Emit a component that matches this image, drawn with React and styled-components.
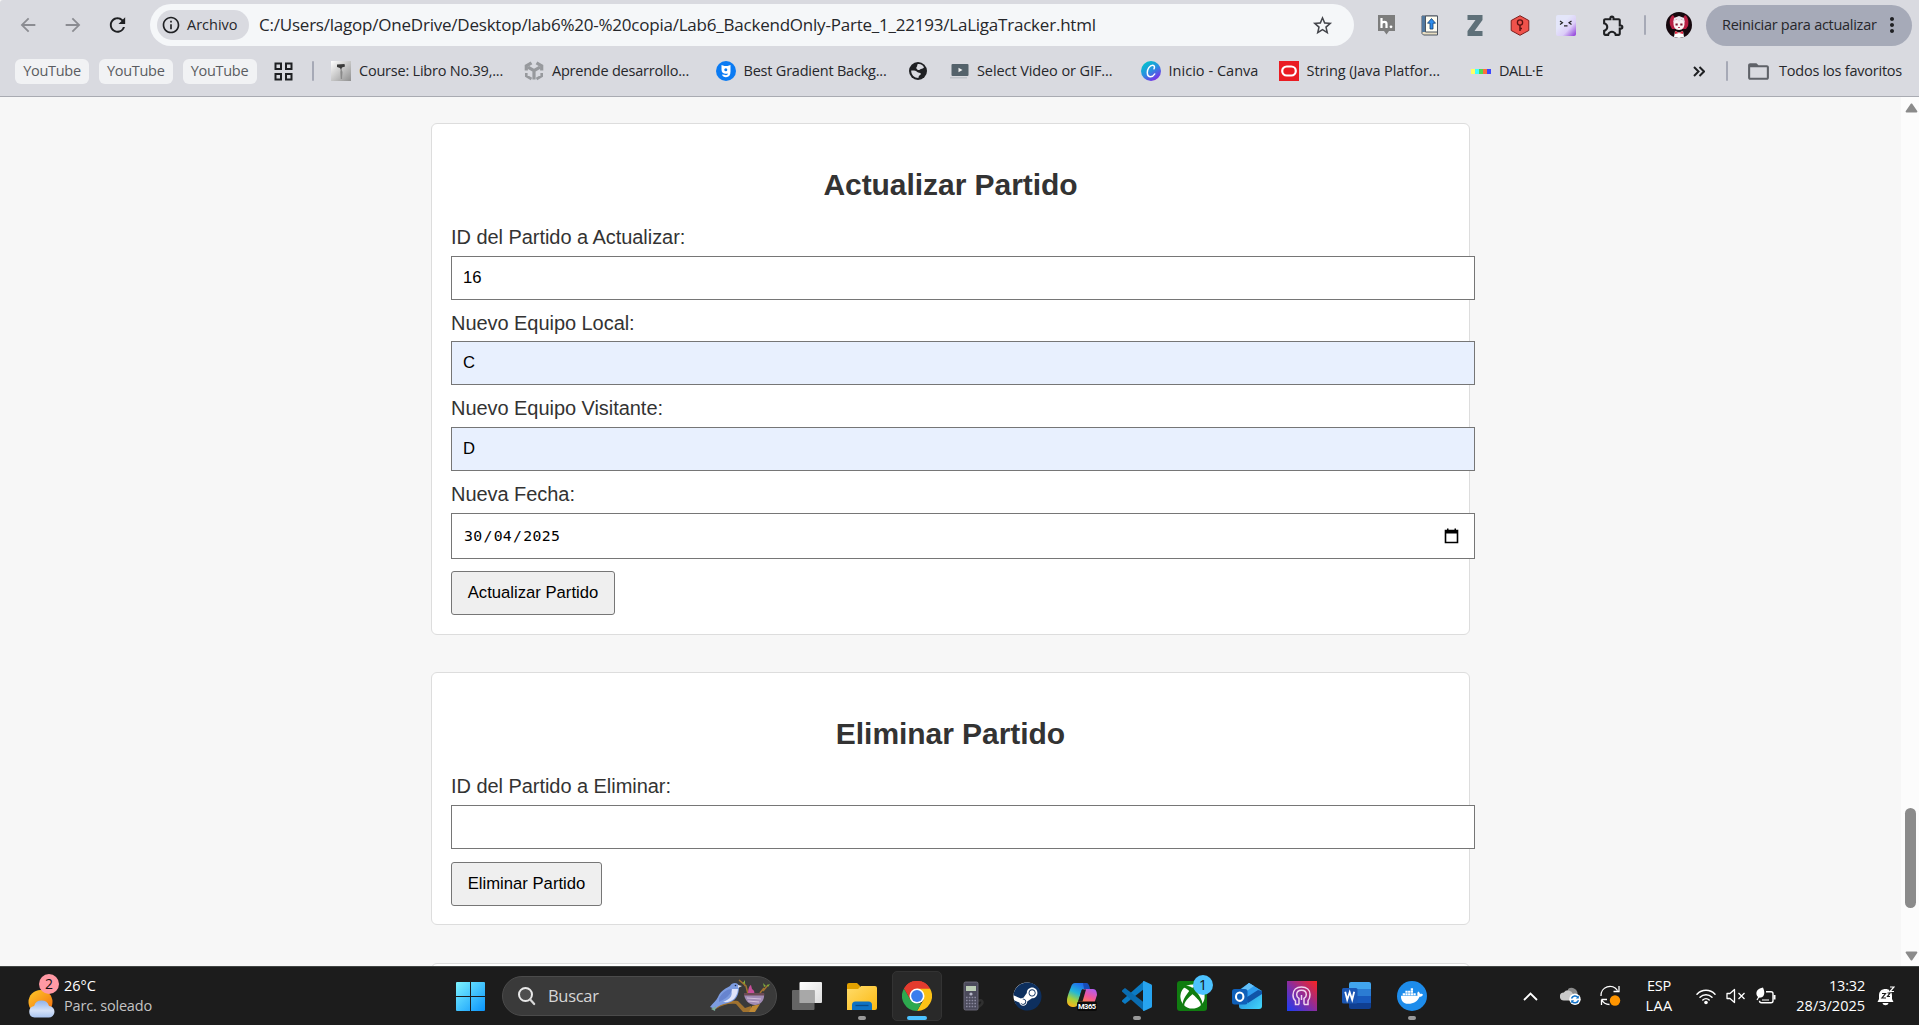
import React from "react";
import styled, { createGlobalStyle, css } from "styled-components";
import {
  MdArrowBack,
  MdArrowForward,
  MdRefresh,
  MdInfoOutline,
  MdStarOutline,
  MdOutlineExtension,
  MdMoreVert,
  MdFolderOpen,
} from "react-icons/md";
import { FaXbox, FaDocker, FaSteam } from "react-icons/fa";

const GlobalStyle = createGlobalStyle`
  * { box-sizing: border-box; }
  html, body { margin: 0; padding: 0; }
  body { overflow: hidden; background: #f7f7f7; }
`;

const uiFont = css`
  font-family: "Open Sans", "Noto Sans", sans-serif;
`;
const pageFont = css`
  font-family: "Liberation Sans", Arial, sans-serif;
`;

const Screen = styled.div`
  display: flex;
  flex-direction: column;
  width: 1919px;
  height: 1025px;
  overflow: hidden;
`;

const UiText = styled.span`
  ${uiFont}
  font-size: ${(p) => p.$size || 14.5}px;
  font-weight: ${(p) => p.$weight || 400};
  letter-spacing: ${(p) => p.$track || 0}px;
  line-height: 20px;
  color: ${(p) => p.$color || "#26272b"};
  white-space: nowrap;
`;

/* ---------- browser chrome ---------- */

const BrowserChrome = styled.header`
  flex: none;
  height: 97px;
  background: #d9dae0;
  border-bottom: 1px solid #a9abb2;
  border-top-left-radius: 3px;
`;

const Toolbar = styled.div`
  display: flex;
  align-items: center;
  height: 50px;
  padding-left: 17px;
`;

const NavButton = styled.span`
  display: flex;
  justify-content: center;
  width: ${(p) => p.$w}px;
  color: ${(p) => (p.$active ? "#1f2023" : "#8b8c92")};
`;

const AddressBar = styled.div`
  display: flex;
  align-items: center;
  width: 1204px;
  height: 42px;
  margin-left: 21px;
  padding: 0 20px 0 7px;
  border-radius: 21px;
  background: #f5f7f9;
`;

const FileChip = styled.div`
  display: flex;
  align-items: center;
  gap: 6px;
  width: 92px;
  height: 30px;
  margin-right: 10px;
  padding-left: 4px;
  border-radius: 15px;
  background: #d9dae0;
  color: #1f2023;
`;

const Url = styled(UiText)`
  flex: 1;
`;

const Extensions = styled.div`
  display: flex;
  align-items: center;
  justify-content: space-between;
  width: 249px;
  margin-left: 23px;
`;

const Divider = styled.span`
  flex: none;
  width: 2px;
  height: 20px;
  margin-left: ${(p) => p.$ml || 0}px;
  border-radius: 1px;
  background: #a6a9b6;
`;

const Avatar = styled.span`
  display: flex;
  margin-left: 20px;
`;

const RestartButton = styled.div`
  display: flex;
  align-items: center;
  justify-content: space-between;
  width: 206px;
  height: 41px;
  margin-left: 14px;
  padding: 0 8px 0 16px;
  border-radius: 21px;
  background: #a6aab8;
`;

const BookmarkBar = styled.nav`
  display: flex;
  align-items: center;
  height: 42px;
  padding-left: 15px;
`;

const BookmarkChip = styled.span`
  display: flex;
  align-items: center;
  justify-content: center;
  width: 74px;
  height: 25px;
  margin-right: 9.75px;
  border-radius: 6px;
  background: #f1f2f4;
`;

const GridIcon = styled.svg`
  margin-left: 7.75px;
`;

const Bookmark = styled.span`
  display: flex;
  flex: none;
  align-items: center;
  gap: 8px;
  width: ${(p) => p.$w}px;
  svg { flex: none; }
`;

const Bookmarks = styled.div`
  display: flex;
  align-items: center;
  flex: 1;
  margin-left: 17px;
`;

const AllBookmarks = styled.div`
  display: flex;
  align-items: center;
  padding-right: 17px;
  svg { flex: none; }
`;

/* ---------- page ---------- */

const Viewport = styled.main`
  display: flex;
  height: 869px;
  flex: none;
  overflow: hidden;
  background: #f7f7f7;
`;

const Page = styled.div`
  ${pageFont}
  display: flex;
  flex: 1;
  flex-direction: column;
  align-items: center;
  gap: 37.5px;
  padding-top: 25.6px;
  color: #333;
`;

const Card = styled.section`
  flex: none;
  width: 1039px;
  height: ${(p) => p.$h}px;
  padding: 44.4px 19px 0;
  border: 1px solid #ddd;
  border-radius: 6px;
  background: #fff;
`;

const Title = styled.h2`
  margin: 0 0 23.9px;
  font-size: 30px;
  line-height: 34px;
  letter-spacing: -0.05px;
  text-align: center;
`;

const Field = styled.label`
  display: block;
  width: 1024px;
  margin-bottom: 12px;
`;

const FieldLabel = styled.span`
  display: block;
  height: 29.7px;
  font-size: 20px;
  line-height: 23px;
  letter-spacing: -0.05px;
`;

const fieldBox = css`
  width: 100%;
  padding: 0 11px;
  border: 1px solid #767676;
  color: #000;
`;

const TextInput = styled.input`
  ${fieldBox}
  ${pageFont}
  display: block;
  height: 44px;
  margin: 0;
  border-radius: 0;
  outline: none;
  background: ${(p) => (p.$autofilled ? "#e8f0fe" : "#fff")};
  font-size: 16.67px;
`;

const DateInput = styled.div`
  ${fieldBox}
  display: flex;
  align-items: center;
  justify-content: space-between;
  height: 46px;
  padding: 0 15px 0 12px;
  background: #fff;
`;

const DateText = styled.span`
  font-family: "DejaVu Sans Mono", monospace;
  font-size: 14.8px;
  letter-spacing: 0.3px;
  span { padding: 0 1px; }
`;

const Button = styled.button`
  ${pageFont}
  display: block;
  width: ${(p) => p.$w}px;
  height: 44px;
  margin-top: ${(p) => p.$mt}px;
  padding: 0;
  border: 1px solid #767676;
  border-radius: 3px;
  background: #efefef;
  color: #000;
  font-size: 16.67px;
  white-space: nowrap;
`;

const Scrollbar = styled.aside`
  display: flex;
  flex-direction: column;
  align-items: center;
  width: 18px;
  padding: 6px 0 5px 2px;
  background: #fcfcfc;
`;

const Thumb = styled.span`
  width: 11px;
  height: 100px;
  margin: 695px 1px auto 0;
  border-radius: 6px;
  background: #8b8b8b;
`;

/* ---------- taskbar ---------- */

const Taskbar = styled.footer`
  display: flex;
  align-items: center;
  flex: none;
  height: 59px;
  border-top: 1px solid #414543;
  background: #1c1c1c;
`;

const Weather = styled.div`
  display: flex;
  align-items: center;
  gap: 6px;
  width: 456px;
  padding-left: 28px;
`;

const Stack = styled.div`
  display: flex;
  flex-direction: column;
  align-items: ${(p) => p.$align || "flex-start"};
  width: ${(p) => (p.$w ? `${p.$w}px` : "auto")};
`;

const SearchBox = styled.div`
  display: flex;
  align-items: center;
  width: 275px;
  height: 40px;
  margin-left: 17px;
  padding: 0 6px 0 14px;
  border: 1px solid #4b4b4b;
  border-radius: 20px;
  background: #3a3a3a;
`;

const SearchLabel = styled(UiText)`
  flex: 1;
  margin-left: 12px;
`;

const Apps = styled.div`
  display: flex;
  gap: 5px;
  margin-left: 5px;
`;

const AppTile = styled.div`
  display: flex;
  flex-direction: column;
  align-items: center;
  width: 50px;
  height: 50px;
  padding-top: 9px;
  border: 1px solid ${(p) => (p.$active ? "#333" : "transparent")};
  border-radius: 5px;
  background: ${(p) => (p.$active ? "#292929" : "transparent")};
  svg { flex: none; }
`;

const Indicator = styled.span`
  flex: none;
  width: ${(p) => (p.$active ? 20 : 8)}px;
  height: 4px;
  margin-top: 5px;
  border-radius: 2px;
  background: ${(p) => (p.$active ? "#4cc2ff" : "#999")};
`;

const IconHolder = styled.div`
  position: relative;
  display: flex;
  width: 30px;
  height: 30px;
  svg { flex: none; }
`;

const Badge = styled.span`
  ${uiFont}
  position: absolute;
  top: ${(p) => p.$top}px;
  right: ${(p) => p.$right}px;
  width: 20px;
  height: 20px;
  border-radius: 50%;
  background: ${(p) => p.$bg};
  color: #111;
  font-size: 14px;
  line-height: 19px;
  text-align: center;
`;

const BoxIcon = styled.span`
  display: flex;
  align-items: center;
  justify-content: center;
  width: 30px;
  height: 30px;
  border-radius: ${(p) => p.$radius || 0};
  background: ${(p) => p.$bg};
  color: #fff;
`;

const Tray = styled.div`
  display: flex;
  align-items: center;
  margin-left: auto;
  padding-right: 24px;
  svg { flex: none; }
`;

const Gap = styled.span`
  width: ${(p) => p.$w}px;
`;

/* ---------- drawings ---------- */

const HypothesisIcon = () => (
  <svg width="19" height="20" viewBox="0 0 19 20">
    <path d="M1 0h17v16h-6l-2.500 3.500L7 16H1z" fill="#7d7d7d" />
    <path d="M4.500 3v10M4.500 8.500c1-2 5-2.300 5 .6V13" fill="none" stroke="#fff" strokeWidth="2.200" />
    <circle cx="14" cy="11.800" r="1.400" fill="#fff" />
  </svg>
);

const BookIcon = () => (
  <svg width="18" height="21" viewBox="0 0 18 21">
    <path d="M1 1h15.500v19H2.500L1 18.500z" fill="#e9dfc4" stroke="#4d5560" />
    <path d="M1 1h3.500v16H1z" fill="#52789e" />
    <path d="M4.500 1H16.500v16H4.500z" fill="#fffdf2" stroke="#4d5560" />
    <path d="M10.500 3.500l4 4.700H12V14H9V8.200H6.500z" fill="#2f8cec" stroke="#123d70" strokeWidth=".8" />
  </svg>
);

const ZIcon = () => (
  <svg width="20" height="21" viewBox="-2 0 20 21">
    <path d="M.5 0h15v5L7.500 16H15.500v5H.5v-5L8.500 5H.5z" fill="#5f7079" />
  </svg>
);

const KeyHexIcon = () => (
  <svg width="20" height="21" viewBox="0 0 20 21">
    <path d="M10 .7l8.800 4.800v10L10 20.300 1.200 15.500v-10z" fill="#f0524b" stroke="#7c1d1d" />
    <circle cx="10" cy="7.500" r="2.600" fill="none" stroke="#5d1212" strokeWidth="1.300" />
    <path d="M10 10v6M10 13.500h2" stroke="#5d1212" strokeWidth="1.500" />
  </svg>
);

const FaceIcon = () => (
  <svg width="20" height="21" viewBox="0 0 20 21">
    <defs>
      <linearGradient id="face" x1="0" y1="0" x2="1" y2="1">
        <stop offset=".35" stopColor="#e4e6fa" />
        <stop offset=".65" stopColor="#dccdf8" />
        <stop offset="1" stopColor="#8b35d8" />
      </linearGradient>
    </defs>
    <rect width="20" height="21" rx="2" fill="url(#face)" />
    <path d="M4 6l2.500 1.800L4 9.600M15.500 6L13 7.800l2.500 1.800M8 10.800h3.500" fill="none" stroke="#222" strokeWidth="1.200" />
  </svg>
);

const AvatarIcon = () => (
  <svg width="26" height="26" viewBox="0 0 26 26">
    <circle cx="13" cy="13" r="13" fill="#16080e" />
    <path d="M4 13C3 7 5 4 7 3l2 3c2-1.500 6-1.500 8 0l2-3c3 2 4 6 3 11l-2 3H6z" fill="#b81f42" />
    <path d="M7.500 11.500c0-3 2-4.500 5.500-4.500s5.500 1.500 5.500 4.500-1.500 6.500-5.500 6.500-5.500-3.500-5.500-6.500z" fill="#fbf3f3" />
    <path d="M7 11l3.500-4 2.500 3 2.500-3 3.500 4-1-5-5-2-5 2z" fill="#e9e4ec" />
    <path d="M9.500 12.500h2.200M14.300 12.500h2.200" stroke="#7e1730" strokeWidth="2" />
    <path d="M12 15.500h2" stroke="#c0405a" />
    <path d="M9 19l4 1.500 4-1.500 1 6-5 1-5-1z" fill="#fff" />
    <path d="M9 19l4 2 4-2v3l-4-1-4 1z" fill="#e0243f" />
  </svg>
);

const CourseIcon = () => (
  <svg width="20" height="20" viewBox="0 0 20 20">
    <defs>
      <linearGradient id="course" x2="1" y2="1">
        <stop stopColor="#fff" />
        <stop offset="1" stopColor="#8f8f8f" />
      </linearGradient>
    </defs>
    <rect width="20" height="20" fill="url(#course)" />
    <path d="M6 3.500l7.500-.5.5 2.500-3 1-1 2.500-1-2-3-1z" fill="#3a3a3a" />
    <path d="M10 7l1.500 4-.5 7H9.800L9.300 11z" fill="#8a8a8a" />
  </svg>
);

const UnityIcon = () => (
  <svg width="20" height="20" viewBox="0 0 20 20" fill="none" stroke="#97999d" strokeWidth="3.200">
    <path d="M7.500 1.800L2.300 5v4.500M12.500 1.800L17.700 5v4.500" />
    <path d="M2.300 12v3L7.500 18M17.700 12v3L12.500 18" strokeWidth="2.600" />
    <path d="M4 6.200L10 9.700 16 6.200M10 9.700V18.500" />
  </svg>
);

const GradientSiteIcon = () => (
  <svg width="20" height="20" viewBox="0 0 20 20">
    <circle cx="10" cy="10" r="10" fill="#0b7bf3" />
    <path d="M5.500 4l3 1h3l3-1v6.500c0 3.800-1.500 5.700-4.500 5.700-2 0-3.500-.8-4-2.700l2.500.2c1 .8 3.500.6 3.300-1.200-3.500 1-6.300-.6-6.300-3.800z" fill="#fff" />
    <circle cx="9.800" cy="8.700" r="1.500" fill="#0b7bf3" />
  </svg>
);

const GlobeIcon = () => (
  <svg width="18" height="18" viewBox="0 0 18 18">
    <circle cx="9" cy="9" r="9" fill="#1f2023" />
    <path d="M8.500 2.200c3-.6 5.500.8 6.500 3.300-1 1.600-3 1-4 2-.8.900-2 .7-2.700 0C7 6.500 7 5.500 8 4.500zM2.200 8.500c2-.3 5 0 6 1.500 1 1.200 3 .6 3.600 1.600.6 1.200-1.600 1.600-2 2.600l-.4 1.800C5.500 16 2 13 2.200 8.500z" fill="#d9dae0" />
  </svg>
);

const VideoIcon = () => (
  <svg width="20" height="16" viewBox="0 0 20 16">
    <rect x="1" y="14" width="17" height="1.500" fill="#bfc3c9" />
    <rect x="2.500" y="1" width="17" height="12" rx="1" fill="#54626b" />
    <path d="M9.500 4.800v4.400l4-2.200z" fill="#f2f2f2" />
  </svg>
);

const CanvaIcon = () => (
  <svg width="20" height="20" viewBox="0 0 20 20">
    <defs>
      <linearGradient id="canva" x1=".1" y1=".1" x2=".7" y2="1">
        <stop stopColor="#00c4cc" />
        <stop offset=".5" stopColor="#2a8ee0" />
        <stop offset="1" stopColor="#7d2ae8" />
      </linearGradient>
    </defs>
    <circle cx="10" cy="10" r="10" fill="url(#canva)" />
    <path d="M13 7.800c.8-1.300.6-3.500-1.300-3.500-3 0-5.400 3.800-5.400 7.200 0 2.700 1.400 4.200 3.300 4.200 1.800 0 3.200-1.100 4.100-2.700" fill="none" stroke="#fff" strokeWidth="1.500" strokeLinecap="round" />
  </svg>
);

const OracleIcon = () => (
  <svg width="20" height="20" viewBox="0 0 20 20">
    <rect width="20" height="20" fill="#ea1b22" />
    <rect x="3.200" y="5.500" width="13.600" height="9" rx="4.500" fill="none" stroke="#fff" strokeWidth="2.200" />
  </svg>
);

const DalleIcon = () => (
  <svg width="20" height="6" viewBox="0 0 20 6">
    <path d="M0 1h4v5H0z" fill="#ffff66" />
    <path d="M4 1h4v5H4z" fill="#42ffff" />
    <path d="M8 1h4v5H8z" fill="#51da4c" />
    <path d="M12 1h4v5h-4z" fill="#ff6e3c" />
    <path d="M16 1h4v5h-4z" fill="#3c46ff" />
  </svg>
);

const WeatherIcon = () => (
  <svg width="30" height="38" viewBox="0 0 30 38">
    <defs>
      <linearGradient id="sun" x2=".8" y2="1">
        <stop stopColor="#ffc928" />
        <stop offset="1" stopColor="#f3700f" />
      </linearGradient>
      <linearGradient id="cloud" x2="0" y2="1">
        <stop stopColor="#8fb2ea" />
        <stop offset=".6" stopColor="#d5e2f8" />
        <stop offset="1" stopColor="#a9c4ef" />
      </linearGradient>
    </defs>
    <circle cx="12.500" cy="21" r="12" fill="url(#sun)" />
    <path d="M6.500 36.500a5.800 5.800 0 0 1-.4-11.500A7.800 7.800 0 0 1 21 25a5.700 5.700 0 0 1-.5 11.500z" fill="url(#cloud)" />
  </svg>
);

const StartIcon = () => (
  <svg width="29" height="29" viewBox="0 0 29 29">
    <defs>
      <linearGradient id="start" gradientUnits="userSpaceOnUse" x1="0" y1="0" x2="29" y2="29">
        <stop stopColor="#7df3ff" />
        <stop offset="1" stopColor="#0a94fb" />
      </linearGradient>
    </defs>
    <path d="M1 0h13v14H0V1a1 1 0 0 1 1-1zM15 0h13a1 1 0 0 1 1 1v13H15zM0 15h14v14H1a1 1 0 0 1-1-1zM15 15h14v13a1 1 0 0 1-1 1H15z" fill="url(#start)" />
  </svg>
);

const SearchIcon = () => (
  <svg width="19" height="20" viewBox="0 0 19 20">
    <circle cx="8.500" cy="8.500" r="6.500" fill="#4d4d4d" stroke="#e8e8e8" strokeWidth="2" />
    <path d="M13.200 13.500l4 4.500" stroke="#d8d8d8" strokeWidth="2.200" strokeLinecap="round" />
  </svg>
);

const BirdIcon = () => (
  <svg width="60" height="34" viewBox="0 0 60 34">
    <path d="M4 29c6-4 13-8 24-7l7 7 6-2v6h-8l-7-8c-7-1-14 1-20 5z" fill="#a0722f" />
    <path d="M39 33l3-6 8-2-5 8z" fill="#c08a35" />
    <path d="M0 28c3-4 6-6 8-10 2-5 6-8 12-11 2-4 9-4 9 1 0 8-3 14-11 16-6 1-10 3-13 6z" fill="#7d9ce0" />
    <path d="M21 10c2 6 0 10-8 13 8 1 14-3 15-13z" fill="#dfe4fb" />
    <path d="M9 19c4-6 8-9 13-9-1 6-7 10-13 13z" fill="#6784cf" />
    <path d="M28 6l4 1-4 2z" fill="#d9dbe8" />
    <circle cx="25.500" cy="6.500" r=".8" fill="#202846" />
    <path d="M29 1l7 6 2 8M34 3l1 4M53 12l5-6M50 14l4-5" stroke="#a0722f" strokeWidth="1.500" fill="none" />
    <path d="M33 4l2-3v4zM54 8l-1-4 3 3zM57 6l3-1-2 3z" fill="#7fae3e" />
    <path d="M38 15c0-6 2-9 3-9l1 4c2 1 3 3 2 6z" fill="#c84f9b" />
    <path d="M34 14h20c1 7-3 12-9 12s-11-5-11-12z" fill="#a18bb4" />
    <path d="M34 14h20v2.500H34z" fill="#6c4a55" />
    <path d="M37 19l14 1M38 22l11 1" stroke="#d3bfd9" />
    <path d="M1 30l5-3-1 5z" fill="#7fae9e" />
  </svg>
);

const TaskViewIcon = () => (
  <svg width="30" height="30" viewBox="0 0 30 30">
    <defs>
      <linearGradient id="tv" x2="1" y2="1">
        <stop stopColor="#fff" />
        <stop offset="1" stopColor="#dcdcdc" />
      </linearGradient>
    </defs>
    <rect x="7.500" y="1" width="22.500" height="21" rx="1" fill="url(#tv)" />
    <rect y="9" width="22.500" height="20" rx="1" fill="#6e6e6e" opacity=".9" />
    <path d="M7.500 9h15v13h-15z" fill="#a8a8a8" />
  </svg>
);

const ExplorerIcon = () => (
  <svg width="30" height="30" viewBox="0 0 30 30">
    <defs>
      <linearGradient id="folder" x2="1" y2="1">
        <stop stopColor="#ffdc6b" />
        <stop offset="1" stopColor="#fcb912" />
      </linearGradient>
    </defs>
    <path d="M0 4a2 2 0 0 1 2-2h8l3 3v5H0z" fill="#e2a100" />
    <path d="M0 8h11l3-3h14a2 2 0 0 1 2 2v20a2 2 0 0 1-2 2H0z" fill="url(#folder)" />
    <path d="M5 29v-5a3.500 3.500 0 0 1 3.500-3.500h13A3.500 3.500 0 0 1 25 24v5z" fill="#0e72c4" />
    <path d="M8.500 24.500h13" stroke="#0a4a87" strokeWidth="1.300" />
  </svg>
);

const ChromeIcon = () => (
  <svg width="30" height="30" viewBox="0 0 30 30">
    <path d="M15 15L2 7.500a15 15 0 0 1 26 0z" fill="#ea4335" />
    <path d="M15 7.500h13A15 15 0 0 1 15 30l6.500-11.300z" fill="#fbc116" />
    <path d="M2 7.500l6.500 11.300 6.500 3.700 4.300-.2L15 30A15 15 0 0 1 2 7.500z" fill="#2da94f" />
    <path d="M2 7.500A15 15 0 0 1 28 7.500H15L8.500 18.800z" fill="#e33b2e" />
    <circle cx="15" cy="15" r="7.500" fill="#fff" />
    <circle cx="15" cy="15" r="5.900" fill="#3b7ded" />
  </svg>
);

const CalculatorIcon = () => (
  <svg width="30" height="30" viewBox="0 0 30 30">
    <path d="M21 20c4-2 6 1 3 4l-4 3" fill="none" stroke="#303030" strokeWidth="2.500" />
    <rect x="7" y="1" width="14" height="28" rx="1.500" fill="#4b4a5b" stroke="#777585" strokeWidth=".8" />
    <rect x="9" y="5" width="10" height="5" fill="#bccdb6" />
    <circle cx="14" cy="13" r="1.600" fill="#b8b8ca" />
    <path d="M9 16.500h10M9 19.500h10M9 22.500h10M9 25.500h10" stroke="#8c8aa0" strokeWidth="1.300" strokeDasharray="1.600 1.200" />
  </svg>
);

const CopilotIcon = () => (
  <svg width="30" height="30" viewBox="0 0 30 30">
    <defs>
      <linearGradient id="cpL" x1=".6" y1="0" x2=".2" y2="1">
        <stop stopColor="#1f6bec" />
        <stop offset=".4" stopColor="#22b7d8" />
        <stop offset=".7" stopColor="#a6d13b" />
        <stop offset="1" stopColor="#ffb21a" />
      </linearGradient>
      <linearGradient id="cpR" x1=".8" y1="0" x2=".3" y2="1">
        <stop stopColor="#b05cf0" />
        <stop offset=".5" stopColor="#f0569a" />
        <stop offset="1" stopColor="#ff8a3c" />
      </linearGradient>
    </defs>
    <path d="M8 2h9c3 0 3 2 4 6h-4c-3 0-3 3-4 7l-2 7c-1 3-2 4-4 4-4 0-7-2-7-6 0-5 3-11 4-14 1-3 2-4 4-4z" fill="url(#cpL)" />
    <path d="M16 2h3c2 0 3 1 4 6h-6z" fill="#174cb8" />
    <path d="M18 8h8c3 0 4 3 4 6l-3 9H11l3-10c1-4 2-5 4-5z" fill="url(#cpR)" />
    <path d="M15 8.500h4l-3.500 12H11z" fill="#1c1c1c" />
    <rect x="10" y="20.500" width="20" height="9.500" rx="2" fill="#0a0a0a" />
    <text x="11" y="28" fill="#fff" fontSize="7.500" fontWeight="700" fontFamily="Roboto, sans-serif" textLength="18">M365</text>
  </svg>
);

const CodeIcon = () => (
  <svg width="30" height="30" viewBox="0 0 30 30">
    <path d="M22 0v8L3 23l-2.500-2a1.400 1.400 0 0 1 0-2z" fill="#0b7bc4" />
    <path d="M.5 9L3 7l19 14.500V30L.5 11a1.400 1.400 0 0 1 0-2z" fill="#0a6cb0" />
    <path d="M22 0l7 3.200c.7.400 1 .8 1 1.600v20.400c0 .8-.3 1.300-1 1.600L22 30c-.7 0-1-.5-1-1V1c0-.5.300-1 1-1z" fill="#27a4f0" />
  </svg>
);

const OutlookIcon = () => (
  <svg width="30" height="30" viewBox="0 0 30 30">
    <defs>
      <linearGradient id="olk" x2="1" y2="1">
        <stop stopColor="#1b74d2" />
        <stop offset="1" stopColor="#43d8fb" />
      </linearGradient>
    </defs>
    <path d="M17 2l13 8v15a3 3 0 0 1-3 3H10a3 3 0 0 1-3-3V9z" fill="url(#olk)" />
    <path d="M17 2l11 7-16 10-5-8z" fill="#2f9df0" />
    <path d="M17 2l5 3-13 9-1-5z" fill="#63c0f8" />
    <path d="M30 10v3L16 22l-4-4 14-9z" fill="#1054a8" />
    <rect y="8" width="15.500" height="15.500" rx="2.500" fill="#0f5fb8" />
    <ellipse cx="7.700" cy="15.700" rx="3.700" ry="4.200" fill="none" stroke="#fff" strokeWidth="2.100" />
  </svg>
);

const HeadIcon = () => (
  <svg width="30" height="30" viewBox="0 0 30 30">
    <defs>
      <linearGradient id="head" x1="0" y1="1" x2="1" y2="0">
        <stop stopColor="#1a3df5" />
        <stop offset=".5" stopColor="#8c2c9c" />
        <stop offset="1" stopColor="#fb2420" />
      </linearGradient>
    </defs>
    <rect width="30" height="30" fill="url(#head)" />
    <g fill="none" stroke="#f0d4ee" strokeWidth="1.500">
      <path d="M12 23.500H8.500v-3.700C6.500 18.500 6 16.500 6 14c0-5 3.500-8 8.500-8 5.200 0 8.500 3 8.500 7.500 0 3-.8 5-2 6.200v3.800h-4" />
      <path d="M12 23.500v-6c-1.500-.8-2.300-2-2.300-3.800 0-2.700 2-4.500 4.800-4.500s4.800 1.800 4.800 4.500c0 1.800-.8 3-2.300 3.800v6" />
      <path d="M14.500 19v-5" />
    </g>
  </svg>
);

const WordIcon = () => (
  <svg width="30" height="30" viewBox="0 0 30 30">
    <path d="M7 3a2 2 0 0 1 2-2h18a2 2 0 0 1 2 2v5H7z" fill="#41a5ee" />
    <path d="M7 8h22v7H7z" fill="#2b7cd3" />
    <path d="M7 15h22v7H7z" fill="#185abd" />
    <path d="M7 22h22v4a2 2 0 0 1-2 2H9a2 2 0 0 1-2-2z" fill="#103f91" />
    <rect y="7" width="15.500" height="15.500" rx="1.500" fill="#1a56b4" />
    <path d="M3.200 10.800l2 8 2.500-7.600 2.500 7.600 2-8" fill="none" stroke="#fff" strokeWidth="1.800" />
  </svg>
);

const ChevronUp = () => (
  <svg width="15" height="9" viewBox="0 0 15 9">
    <path d="M1 8l6.500-6.500L14 8" fill="none" stroke="#fff" strokeWidth="1.800" />
  </svg>
);

const CloudSyncIcon = () => (
  <svg width="21" height="20" viewBox="0 0 21 20">
    <path d="M8 3a6 6 0 0 1 9.500 5.500L9 13z" fill="#8b8b8b" />
    <path d="M4 14.500a4 4 0 0 1-.2-8A5.200 5.200 0 0 1 13 8l2 6.500z" fill="#c9c9c9" />
    <circle cx="15" cy="13.300" r="5.700" fill="#fff" />
    <path d="M11.500 12.500a3.700 3.700 0 0 1 6.500-1M18.500 14.200a3.700 3.700 0 0 1-6.500 1" fill="none" stroke="#1273c9" strokeWidth="1.500" />
    <path d="M18.800 9.500v3h-3zM11.200 17.200v-3h3z" fill="#1273c9" />
  </svg>
);

const UpdateIcon = () => (
  <svg width="21" height="22" viewBox="0 0 21 22">
    <path d="M1 11a9 9 0 0 1 16.500-5.500M19 1v5.500h-5.500M1.500 14.500H7M1.500 20v-5.500c1.500 3 4.500 5 8 5" fill="none" stroke="#fff" strokeWidth="1.300" />
    <circle cx="15" cy="15.500" r="5.200" fill="#ff9500" />
  </svg>
);

const WifiIcon = () => (
  <svg width="20" height="17" viewBox="0 0 20 17">
    <g fill="none" stroke="#fff" strokeWidth="1.500" strokeLinecap="round">
      <path d="M1 6.200a12.500 12.500 0 0 1 18 0" />
      <path d="M4 9.300a8.400 8.400 0 0 1 12 0" />
      <path d="M6.800 12a4.600 4.600 0 0 1 6.400 0" />
    </g>
    <circle cx="10" cy="14.500" r="1.800" fill="#fff" />
  </svg>
);

const MuteIcon = () => (
  <svg width="20" height="16" viewBox="0 0 20 16">
    <path d="M1 5.500h3L8.500 1.500v13L4 10.500H1z" fill="none" stroke="#fff" strokeWidth="1.300" strokeLinejoin="round" />
    <path d="M12.500 5l6 6M18.500 5l-6 6" stroke="#fff" strokeWidth="1.300" />
  </svg>
);

const BatteryIcon = () => (
  <svg width="20" height="18" viewBox="0 0 20 18">
    <path d="M10 4.800h5a2 2 0 0 1 2 2v7a2 2 0 0 1-2 2H5.500a2 2 0 0 1-2-2" fill="none" stroke="#fff" strokeWidth="1.400" />
    <path d="M18.500 8v4.500" stroke="#fff" strokeWidth="2" />
    <path d="M7 .5C2 1.500 0 4 .5 7.500 1 10 3 11 5 10.500 9 9.500 9 5 7 .5zM6 12.500h7v1H6z" fill="#fff" />
    <path d="M1 13l4-7" stroke="#fff" strokeWidth="1.200" />
  </svg>
);

const BellIcon = () => (
  <svg width="18" height="20" viewBox="0 0 18 20">
    <path d="M2 9.500C2 5 5 3 8.500 3S15 5 15 9.500V13l1.500 3H.5L2 13zM5.500 17h6c-.5 3-5.500 3-6 0z" fill="#fff" />
    <path d="M5 7.500h3.500L5 12h4M10.500 7h2.500L10.500 10.500H13" fill="none" stroke="#1c1c1c" strokeWidth="1.200" />
    <path d="M11.500 0H18v6.500h-5.500z" fill="#1c1c1c" />
    <path d="M13 1h4l-4 4.500h4" fill="none" stroke="#fff" strokeWidth="1.200" />
  </svg>
);

const ScrollArrow = ({ down }) => (
  <svg width="13" height="10" viewBox="0 0 13 10">
    <path
      d={down ? "M1.500.5h10c.8 0 1.100.8.7 1.400L7.200 9.200c-.3.500-1.100.5-1.400 0L.8 1.900C.400 1.300.700.500 1.500.500z" : "M1.500 9.500h10c.8 0 1.100-.8.7-1.400L7.200.8c-.3-.5-1.100-.5-1.400 0L.8 8.100c-.4.600-.1 1.400.7 1.400z"}
      fill="#8b8b8b"
    />
  </svg>
);

/* ---------- data ---------- */

const bookmarks = [
  { text: "Course: Libro No.39,...", w: 193, track: -0.22, icon: <CourseIcon /> },
  { text: "Aprende desarrollo...", w: 191.5, track: -0.23, icon: <UnityIcon /> },
  { text: "Best Gradient Backg...", w: 193, track: -0.21, icon: <GradientSiteIcon /> },
  { text: "", w: 40.5, icon: <GlobeIcon /> },
  { text: "Select Video or GIF...", w: 191.5, track: -0.09, icon: <VideoIcon /> },
  { text: "Inicio - Canva", w: 138, track: 0.03, icon: <CanvaIcon /> },
  { text: "String (Java Platfor...", w: 192.5, track: -0.07, icon: <OracleIcon /> },
  { text: "DALL·E", w: 80, track: -0.5, icon: <DalleIcon /> },
];

const SteamIcon = () => (
  <BoxIcon $radius="50%" $bg="radial-gradient(circle, #fff 13px, #1c1c1c 14px)">
    <FaSteam size={29} color="#0d2f5e" />
  </BoxIcon>
);

const XboxIcon = () => (
  <IconHolder>
    <BoxIcon $radius="3px" $bg="#107c10">
      <FaXbox size={25} />
    </BoxIcon>
    <Badge $bg="#4cc2ff" $top={-6} $right={-6}>1</Badge>
  </IconHolder>
);

const DockerIcon = () => (
  <BoxIcon $radius="50%" $bg="#1d8ceb">
    <FaDocker size={22} />
  </BoxIcon>
);

const apps = [
  { id: "taskview", icon: <TaskViewIcon /> },
  { id: "explorer", icon: <ExplorerIcon />, open: true },
  { id: "chrome", icon: <ChromeIcon />, open: true, active: true },
  { id: "calculator", icon: <CalculatorIcon /> },
  { id: "steam", icon: <SteamIcon /> },
  { id: "copilot", icon: <CopilotIcon /> },
  { id: "code", icon: <CodeIcon />, open: true },
  { id: "xbox", icon: <XboxIcon /> },
  { id: "outlook", icon: <OutlookIcon /> },
  { id: "head", icon: <HeadIcon /> },
  { id: "word", icon: <WordIcon /> },
  { id: "docker", icon: <DockerIcon />, open: true },
];

const updateFields = [
  { label: "ID del Partido a Actualizar:", value: "16" },
  { label: "Nuevo Equipo Local:", value: "C", autofilled: true },
  { label: "Nuevo Equipo Visitante:", value: "D", autofilled: true },
];

/* ---------- sections ---------- */

function Chrome() {
  return (
    <BrowserChrome>
      <Toolbar>
        <NavButton $w={22}><MdArrowBack size={22} /></NavButton>
        <NavButton $w={67}><MdArrowForward size={22} /></NavButton>
        <NavButton $w={23} $active><MdRefresh size={24} /></NavButton>
        <AddressBar>
          <FileChip>
            <MdInfoOutline size={20} />
            <UiText $weight={500}>Archivo</UiText>
          </FileChip>
          <Url $size={17} $track={-0.22}>
            C:/Users/lagop/OneDrive/Desktop/lab6%20-%20copia/Lab6_BackendOnly-Parte_1_22193/LaLigaTracker.html
          </Url>
          <MdStarOutline size={23} color="#44464c" />
        </AddressBar>
        <Extensions>
          <HypothesisIcon />
          <BookIcon />
          <ZIcon />
          <KeyHexIcon />
          <FaceIcon />
          <MdOutlineExtension size={25} color="#1f2023" />
        </Extensions>
        <Divider $ml={18} />
        <Avatar><AvatarIcon /></Avatar>
        <RestartButton>
          <UiText $track={-0.28}>Reiniciar para actualizar</UiText>
          <MdMoreVert size={24} color="#1f2023" />
        </RestartButton>
      </Toolbar>
      <BookmarkBar>
        {[0, 1, 2].map((i) => (
          <BookmarkChip key={i}>
            <UiText $track={-0.3} $color="#5a5c61">YouTube</UiText>
          </BookmarkChip>
        ))}
        <GridIcon width="19" height="19" viewBox="0 0 19 19" fill="none" stroke="#1f2023" strokeWidth="2">
          <path d="M1.500 1.500h5.500v5.500h-5.500zM12 1.500h5.500v5.500H12zM1.500 12h5.500v5.500h-5.500zM12 12h5.500v5.500H12z" />
        </GridIcon>
        <Divider $ml={19} />
        <Bookmarks>
          {bookmarks.map((b, i) => (
            <Bookmark key={i} $w={b.w}>
              {b.icon}
              {b.text && <UiText $track={b.track}>{b.text}</UiText>}
            </Bookmark>
          ))}
        </Bookmarks>
        <AllBookmarks>
          <svg width="12" height="11" viewBox="0 0 12 11" fill="none" stroke="#1f2023" strokeWidth="2">
            <path d="M1 1l4.500 4.500L1 10M6.500 1L11 5.500 6.500 10" />
          </svg>
          <Divider $ml={21} />
          <Gap $w={18} />
          <MdFolderOpen size={25} color="#5f6268" />
          <Gap $w={8} />
          <UiText $track={-0.23}>Todos los favoritos</UiText>
        </AllBookmarks>
      </BookmarkBar>
    </BrowserChrome>
  );
}

function Forms() {
  return (
    <Page>
      <Card $h={512}>
        <Title>Actualizar Partido</Title>
        {updateFields.map((f) => (
          <Field key={f.label}>
            <FieldLabel>{f.label}</FieldLabel>
            <TextInput defaultValue={f.value} $autofilled={f.autofilled} />
          </Field>
        ))}
        <Field as="div">
          <FieldLabel>Nueva Fecha:</FieldLabel>
          <DateInput>
            <DateText>30<span>/</span>04<span>/</span>2025</DateText>
            <svg width="15" height="16" viewBox="0 0 15 16">
              <path d="M1.500 2.500h12V14.500h-12z" fill="none" stroke="#000" strokeWidth="1.600" />
              <path d="M1 2h13v3.500H1zM3 .5h1.500V3H3zM10.500.5H12V3h-1.500z" fill="#000" />
            </svg>
          </DateInput>
        </Field>
        <Button $w={164} $mt={0}>Actualizar Partido</Button>
      </Card>
      <Card $h={253}>
        <Title>Eliminar Partido</Title>
        <Field>
          <FieldLabel>ID del Partido a Eliminar:</FieldLabel>
          <TextInput defaultValue="" />
        </Field>
        <Button $w={151} $mt={13}>Eliminar Partido</Button>
      </Card>
      <Card $h={200} />
    </Page>
  );
}

function SystemBar() {
  return (
    <Taskbar>
      <Weather>
        <IconHolder>
          <WeatherIcon />
          <Badge $bg="#ff99a4" $top={-7} $right={-1}>2</Badge>
        </IconHolder>
        <Stack>
          <UiText $color="#fff">26°C</UiText>
          <UiText $color="#c4c4c4" $track={-0.18}>Parc. soleado</UiText>
        </Stack>
      </Weather>
      <StartIcon />
      <SearchBox>
        <SearchIcon />
        <SearchLabel $size={16.5} $track={-0.3} $color="#d6d6d6">Buscar</SearchLabel>
        <BirdIcon />
      </SearchBox>
      <Apps>
        {apps.map((a) => (
          <AppTile key={a.id} $active={a.active}>
            {a.icon}
            {a.open && <Indicator $active={a.active} />}
          </AppTile>
        ))}
      </Apps>
      <Tray>
        <ChevronUp />
        <Gap $w={22} />
        <CloudSyncIcon />
        <Gap $w={19} />
        <UpdateIcon />
        <Gap $w={20} />
        <Stack $align="center" $w={36}>
          <UiText $color="#fff" $track={-0.2}>ESP</UiText>
          <UiText $color="#fff" $track={0.3}>LAA</UiText>
        </Stack>
        <Gap $w={19} />
        <WifiIcon />
        <Gap $w={10} />
        <MuteIcon />
        <Gap $w={10} />
        <BatteryIcon />
        <Gap $w={19} />
        <Stack $align="flex-end" $w={70}>
          <UiText $color="#fff" $track={-0.2}>13:32</UiText>
          <UiText $color="#fff">28/3/2025</UiText>
        </Stack>
        <Gap $w={12} />
        <BellIcon />
      </Tray>
    </Taskbar>
  );
}

export default function App() {
  return (
    <Screen>
      <GlobalStyle />
      <Chrome />
      <Viewport>
        <Forms />
        <Scrollbar>
          <ScrollArrow />
          <Thumb />
          <ScrollArrow down />
        </Scrollbar>
      </Viewport>
      <SystemBar />
    </Screen>
  );
}
